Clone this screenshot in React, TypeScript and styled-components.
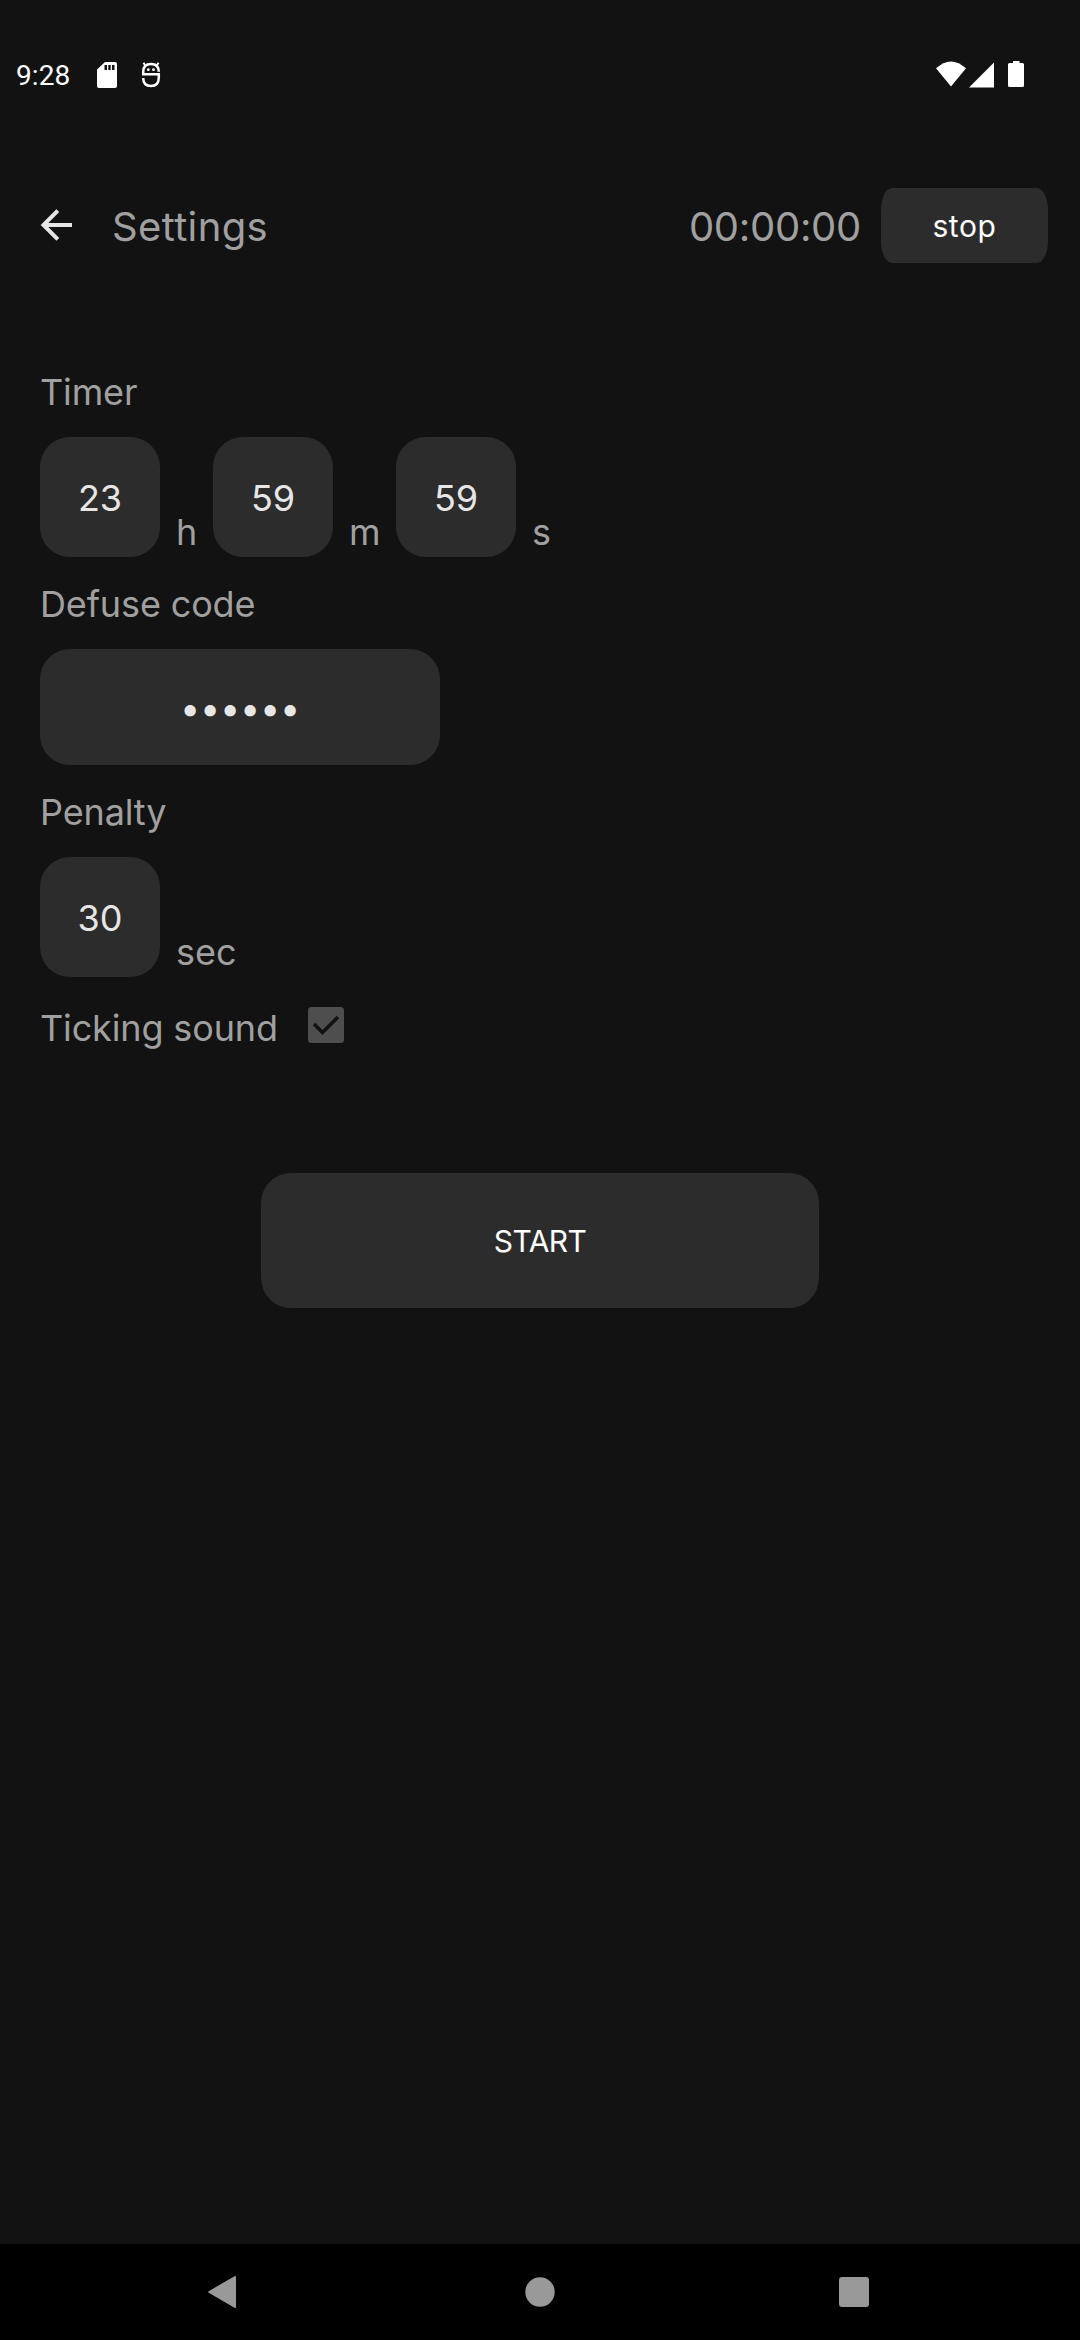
import React from "react";
import styled, { createGlobalStyle } from "styled-components";

const GlobalStyle = createGlobalStyle`
  * { box-sizing: border-box; }
  body { margin: 0; background: #121212; }
`;

const Screen = styled.div`
  width: 1080px;
  height: 2340px;
  display: flex;
  flex-direction: column;
  background: #121212;
  color: #a0a0a0;
  font-family: Inter, "Liberation Sans", sans-serif;
`;

const StatusBar = styled.header`
  height: 150px;
  padding: 0 54px 0 16px;
  display: flex;
  justify-content: space-between;
  align-items: center;
  color: #fff;
`;

const StatusGroup = styled.div`
  display: flex;
  align-items: center;
`;

const Clock = styled.span`
  width: 81px;
  padding-top: 2px;
  font: 400 28px/34px Roboto, sans-serif;
  letter-spacing: 0.1px;
`;

const Icon = styled.svg<{ $gap?: number; $top?: number }>`
  display: block;
  flex: none;
  margin-left: ${(p) => p.$gap ?? 0}px;
  margin-top: ${(p) => p.$top ?? 0}px;
`;

const AppBar = styled.div`
  height: 150px;
  padding: 1px 32px 0 40px;
  display: flex;
  align-items: center;
`;

const BackButton = styled.button`
  padding: 0 0 1px;
  border: 0;
  width: 72px;
  background: none;
`;

const Title = styled.h1`
  margin: 2px 0 0;
  flex: 1;
  font-size: 40px;
  line-height: 50px;
  font-weight: 400;
  letter-spacing: 0.36px;
`;

const Countdown = styled.span`
  margin: 2px 20px 0 0;
  font-size: 40px;
  line-height: 50px;
  letter-spacing: -0.3px;
`;

const StopButton = styled.button`
  width: 167px;
  height: 75px;
  padding: 1px 0 0;
  border: 0;
  border-radius: 11px / 22px;
  background: #2c2c2c;
  color: #fff;
  font: 400 30px/36px Inter, sans-serif;
  letter-spacing: 0.6px;
`;

const Form = styled.main`
  flex: 1;
  padding: 70px 40px 0;
  display: flex;
  flex-direction: column;
  align-items: flex-start;
`;

const Label = styled.label`
  font-size: 36px;
  line-height: 44px;
  letter-spacing: -0.14px;
`;

const FieldRow = styled.div<{ $bottom: number }>`
  display: flex;
  align-items: flex-end;
  margin: 23px 0 ${(p) => p.$bottom}px;
`;

const Field = styled.div<{ $wide?: boolean }>`
  width: ${(p) => (p.$wide ? 400 : 120)}px;
  height: ${(p) => (p.$wide ? 116 : 120)}px;
  padding-top: 2px;
  display: flex;
  align-items: center;
  justify-content: center;
  border-radius: 30px;
  background: #2c2c2c;
  color: #e6e6e6;
  font-size: 36px;
  line-height: 44px;
`;

const Masked = styled.span`
  letter-spacing: -0.25px;
`;

const Unit = styled.span<{ $width?: number }>`
  width: ${(p) => (p.$width ? `${p.$width}px` : "auto")};
  padding: 0 0 3px 16px;
  font-size: 36px;
  line-height: 44px;
`;

const CheckRow = styled.div`
  display: flex;
  align-items: flex-start;
`;

const StartButton = styled.button`
  align-self: center;
  width: 558px;
  height: 135px;
  margin-top: 123px;
  padding: 1px 0 0;
  border: 0;
  border-radius: 30px;
  background: #2c2c2c;
  color: #fff;
  font: 400 30px/36px Inter, sans-serif;
  letter-spacing: -0.6px;
`;

const NavBar = styled.nav`
  height: 96px;
  padding: 0 211px 0 207px;
  display: flex;
  align-items: center;
  justify-content: space-between;
  background: #000;
`;

export default function App() {
  return (
    <>
      <GlobalStyle />
      <Screen>
        <StatusBar>
          <StatusGroup>
            <Clock>9:28</Clock>
            <Icon width="20" height="26" viewBox="0 0 20 26">
              <path fill="#fff" fillRule="evenodd" d="M8 0H18Q20 0 20 2V24Q20 26 18 26H2Q0 26 0 24V7.500ZM7.500 3V8H10V3ZM11.300 3V8H13.700V3ZM15 3V8H17.500V3Z" />
            </Icon>
            <Icon $gap={24} width="20" height="26" viewBox="0 0 20 26" fill="none" stroke="#fff" strokeWidth="2.5">
              <path d="M17.800 9.800C17.800 4 15 1.900 10 1.900S2.200 4 2.200 9.800V12.200H17.800V15.500C17.800 21 15 24 10 24S2.200 21 2.200 16" />
              <path d="M4.500 4L2.500 .8M15.500 4L17.500 .8" strokeWidth="2" />
              <circle cx="7.300" cy="7.700" r="1.400" fill="#fff" stroke="none" />
              <circle cx="12.500" cy="7.700" r="1.400" fill="#fff" stroke="none" />
            </Icon>
          </StatusGroup>
          <StatusGroup>
            <Icon width="90" height="28" viewBox="0 0 90 28" fill="#fff">
              <path d="M0 7.300Q15 -6.500 30 7.300L15 25.500Z" />
              <path d="M33 26.500L58 1.500V26.500Z" />
              <path d="M77 0H83.500V2H86.500Q88 2 88 3.500V24.500Q88 26 86.500 26H73.500Q72 26 72 24.500V3.500Q72 2 73.500 2H77Z" />
            </Icon>
          </StatusGroup>
        </StatusBar>
        <AppBar>
          <BackButton aria-label="Back">
            <Icon width="32" height="32" viewBox="0 0 32 32" fill="none" stroke="#e6e6e6" strokeWidth="4">
              <path d="M32 16H3.500M17.800 1.700L3.500 16L17.800 30.300" />
            </Icon>
          </BackButton>
          <Title>Settings</Title>
          <Countdown>00:00:00</Countdown>
          <StopButton>stop</StopButton>
        </AppBar>
        <Form>
          <Label>Timer</Label>
          <FieldRow $bottom={25}>
            <Field>23</Field>
            <Unit $width={53}>h</Unit>
            <Field>59</Field>
            <Unit $width={63}>m</Unit>
            <Field>59</Field>
            <Unit>s</Unit>
          </FieldRow>
          <Label>Defuse code</Label>
          <FieldRow $bottom={25}>
            <Field $wide>
              <Masked>••••••</Masked>
            </Field>
          </FieldRow>
          <Label>Penalty</Label>
          <FieldRow $bottom={29}>
            <Field>30</Field>
            <Unit>sec</Unit>
          </FieldRow>
          <CheckRow>
            <Label>Ticking sound</Label>
            <Icon $gap={30} $top={1} width="36" height="36" viewBox="0 0 36 36">
              <rect width="36" height="36" rx="3.500" fill="#4e4e4e" />
              <path d="M6 17L14.500 25.500L30 10" fill="none" stroke="#121212" strokeWidth="3.600" />
            </Icon>
          </CheckRow>
          <StartButton>START</StartButton>
        </Form>
        <NavBar>
          <Icon width="34" height="34" viewBox="0 0 34 34">
            <path d="M28 2L2.200 17L28 32Z" fill="#999" stroke="#999" strokeWidth="2" strokeLinejoin="round" />
          </Icon>
          <Icon width="30" height="30" viewBox="0 0 30 30">
            <circle cx="15" cy="15" r="14.700" fill="#999" />
          </Icon>
          <Icon width="30" height="30" viewBox="0 0 30 30">
            <rect width="30" height="30" rx="3" fill="#999" />
          </Icon>
        </NavBar>
      </Screen>
    </>
  );
}
